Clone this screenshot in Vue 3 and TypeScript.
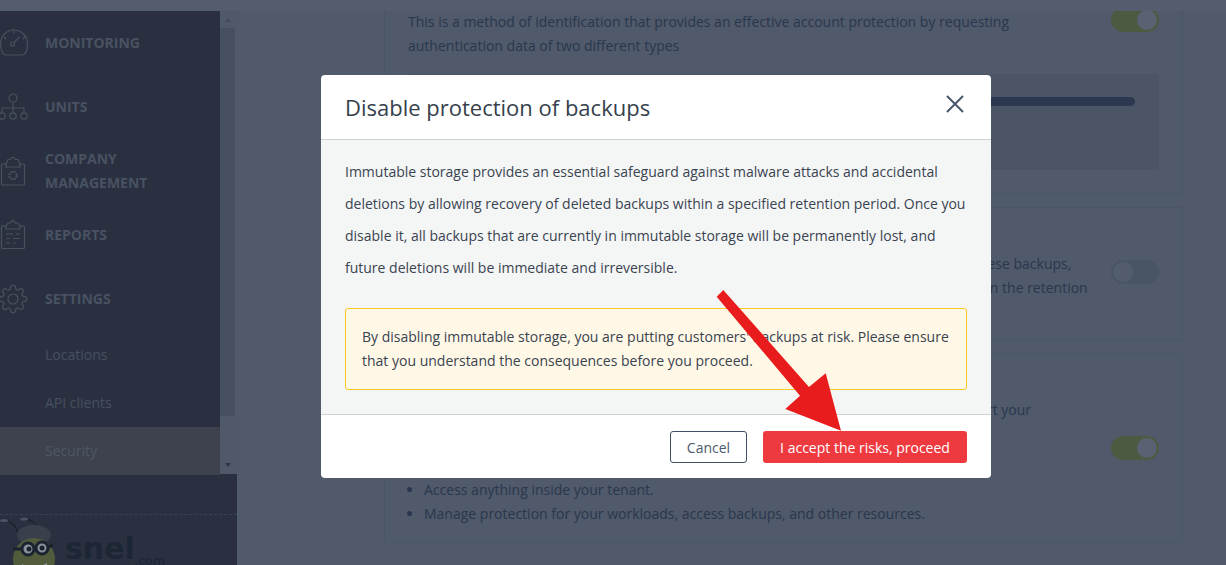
<script setup lang="ts">
interface NavItem {
  lines: string[];
  sub?: boolean;
  active?: boolean;
  icon?: string;
}
const nav: NavItem[] = [
  { lines: ["MONITORING"], icon: "gauge" },
  { lines: ["UNITS"], icon: "org" },
  { lines: ["COMPANY", "MANAGEMENT"], icon: "cog-clip" },
  { lines: ["REPORTS"], icon: "report" },
  { lines: ["SETTINGS"], icon: "gear" },
  { lines: ["Locations"], sub: true },
  { lines: ["API clients"], sub: true },
  { lines: ["Security"], sub: true, active: true },
];
</script>

<template>
  <div class="page">
    <div class="topbar"></div>
    <div class="shell">
      <aside class="side">
        <div class="side-top">
          <nav class="nav">
            <div
              v-for="item in nav"
              :key="item.lines[0]"
              class="row"
              :class="{ sub: item.sub, active: item.active }"
            >
              <svg v-if="item.icon" class="ico" width="30" height="30" viewBox="0 0 30 30" fill="none">
                <g v-if="item.icon === 'gauge'">
                  <path d="M6 27H21.500C25 27 27.500 23 27.500 15.500A13.500 13.500 0 1 0 0.500 15.500C0.500 23 3 27 6 27Z" />
                  <circle cx="12.500" cy="16" r="2" />
                  <path d="M14 14.500L19.500 9M14 2.500V5.500M4 9L6 11M25 9L23 11" />
                </g>
                <g v-else-if="item.icon === 'org'">
                  <circle cx="13" cy="6" r="4" />
                  <circle cx="2" cy="24" r="3.200" />
                  <circle cx="13" cy="24" r="3.200" />
                  <circle cx="24" cy="24" r="3.200" />
                  <path d="M13 10V20.800M2 20.800V16H24V20.800" />
                </g>
                <g v-else-if="item.icon === 'cog-clip'">
                  <path d="M7 8H2.500A1 1 0 0 0 1.500 9V28A1 1 0 0 0 2.500 29H23.500A1 1 0 0 0 24.500 28V9A1 1 0 0 0 23.500 8H19" />
                  <path d="M6 11H20V8L18 3.500H15L14 1.500H11.500L10.500 3.500H8L6 8Z" />
                  <circle cx="13" cy="19.500" r="3.800" stroke-dasharray="2 1" stroke-width="2" />
                </g>
                <g v-else-if="item.icon === 'report'">
                  <path d="M7 6H2.500A1 1 0 0 0 1.500 7V27.500A1 1 0 0 0 2.500 28.500H23.500A1 1 0 0 0 24.500 27.500V7A1 1 0 0 0 23.500 6H19" />
                  <path d="M6 9H20V6L18 3H15L14 0.800H11.500L10.500 3H8L6 6Z" />
                  <path d="M6 14H13M16 14H20M6 18.500H10M13 18.500H20M6 23H10M13 23H16" />
                </g>
                <g v-else transform="translate(-2 0) scale(1.25)" stroke-width="0.96">
                  <circle cx="12" cy="12" r="4" />
                  <path d="M19.400 15a1.650 1.650 0 0 0 .33 1.820l.06.06a2 2 0 0 1 0 2.830 2 2 0 0 1-2.830 0l-.06-.06a1.650 1.650 0 0 0-1.820-.33 1.650 1.650 0 0 0-1 1.510V21a2 2 0 0 1-2 2 2 2 0 0 1-2-2v-.09A1.650 1.650 0 0 0 9 19.400a1.650 1.650 0 0 0-1.820.33l-.06.06a2 2 0 0 1-2.830 0 2 2 0 0 1 0-2.830l.06-.06a1.650 1.650 0 0 0 .33-1.820 1.650 1.650 0 0 0-1.510-1H3a2 2 0 0 1-2-2 2 2 0 0 1 2-2h.09A1.650 1.650 0 0 0 4.600 9a1.650 1.650 0 0 0-.33-1.820l-.06-.06a2 2 0 0 1 0-2.830 2 2 0 0 1 2.830 0l.06.06a1.650 1.650 0 0 0 1.820.33H9a1.650 1.650 0 0 0 1-1.510V3a2 2 0 0 1 2-2 2 2 0 0 1 2 2v.09a1.650 1.650 0 0 0 1 1.510 1.650 1.650 0 0 0 1.820-.33l.06-.06a2 2 0 0 1 2.830 0 2 2 0 0 1 0 2.830l-.06.06a1.650 1.650 0 0 0-.33 1.820V9a1.650 1.650 0 0 0 1.510 1H21a2 2 0 0 1 2 2 2 2 0 0 1-2 2h-.09a1.650 1.650 0 0 0-1.510 1z" />
                </g>
              </svg>
              <div class="label">
                <div v-for="l in item.lines" :key="l">{{ l }}</div>
              </div>
            </div>
          </nav>
          <div class="scroll">
            <span class="arrow up"></span>
            <span class="thumb"></span>
            <span class="arrow down"></span>
          </div>
        </div>
        <div class="side-foot">
          <div class="logo">
            <svg class="bee" width="56" height="50" viewBox="0 0 56 50" fill="none">
              <path d="M0 2C8 0 14 5 17 14M22 0C30 0 36 5 40 12" stroke="#1b2331" stroke-width="1.300" />
              <ellipse cx="3" cy="1.500" rx="4" ry="1.600" fill="#4a5363" />
              <ellipse cx="23" cy="0" rx="4" ry="1.600" fill="#4a5363" />
              <ellipse cx="33" cy="16" rx="17" ry="10" fill="#3a3f4c" />
              <ellipse cx="33" cy="40" rx="21" ry="21" fill="#525c3c" />
              <path d="M21 45C27 49 39 49 46 44V50H21Z" fill="#8e959c" />
              <circle cx="27" cy="30" r="6" fill="#8a939c" stroke="#1b2331" stroke-width="3" />
              <circle cx="41" cy="29" r="6" fill="#8a939c" stroke="#1b2331" stroke-width="3" />
              <circle cx="28" cy="30" r="2.500" fill="#1b2331" />
              <circle cx="41" cy="29" r="2.500" fill="#1b2331" />
              <path d="M20 30H12M47 28L52 26" stroke="#1b2331" stroke-width="3" />
            </svg>
            <span class="word">snel</span><span class="dot">.com</span>
          </div>
        </div>
      </aside>

      <main class="main">
        <section class="card card-a">
          <div class="split">
            <p class="txt">This is a method of identification that provides an effective account protection by requesting<br />authentication data of two different types</p>
            <span class="toggle on top"><i></i></span>
          </div>
          <div class="box"><div class="bar"></div></div>
        </section>
        <section class="card card-b">
          <div class="split">
            <div>
              <h3 class="head">Immutable storage</h3>
              <p class="txt">Immutable storage keeps deleted backups in a safe state for a period. You can recover these backups,<br />and you will keep paying for the storage space that they occupy, even after deletion, within the retention<br />period that you specify.</p>
            </div>
            <span class="toggle off-pos"><i></i></span>
          </div>
        </section>
        <section class="card card-c">
          <div class="split">
            <div>
              <h3 class="head">Support access</h3>
              <p class="txt">When you enable this setting, support engineers receive access to your account to support your<br />workloads. While this option is on, they are able to:</p>
              <ul class="list">
                <li>Access anything inside your tenant.</li>
                <li>Manage protection for your workloads, access backups, and other resources.</li>
              </ul>
            </div>
            <span class="toggle on c-pos"><i></i></span>
          </div>
        </section>
      </main>
    </div>

    <div class="overlay">
      <div class="modal" role="dialog">
        <header class="m-head">
          <h2>Disable protection of backups</h2>
          <svg class="close" width="18" height="18" viewBox="0 0 18 18">
            <path d="M1 1L17 17M17 1L1 17" stroke="#47566a" stroke-width="2" fill="none" />
          </svg>
        </header>
        <div class="m-body">
          <p>Immutable storage provides an essential safeguard against malware attacks and accidental deletions by allowing recovery of deleted backups within a specified retention period. Once you disable it, all backups that are currently in immutable storage will be permanently lost, and future deletions will be immediate and irreversible.</p>
          <div class="warn">By disabling immutable storage, you are putting customers' backups at risk. Please ensure that you understand the consequences before you proceed.</div>
        </div>
        <footer class="m-foot">
          <button class="btn ghost">Cancel</button>
          <button class="btn danger">I accept the risks, proceed</button>
        </footer>
      </div>
    </div>

    <svg class="pointer" width="1226" height="565" viewBox="0 0 1226 565">
      <polygon points="716.700,296.700 723.300,290 809,387 825.700,373.300 841,430.700 785.300,409 800,395.700" fill="#e81c1c" />
    </svg>
  </div>
</template>

<style>
html,
body {
  margin: 0;
  background: #505a6a;
}
</style>

<style scoped>
.page {
  position: relative;
  width: 1226px;
  height: 565px;
  overflow: hidden;
  background: #505a6a;
  font-family: "Open Sans", "Liberation Sans", sans-serif;
  font-size: 14px;
  line-height: 24px;
  display: flex;
  flex-direction: column;
}
.topbar {
  height: 11px;
  flex: none;
  background: #535d6d;
  position: relative;
  z-index: 1;
}
.shell {
  flex: 1;
  display: flex;
  min-height: 0;
}
.side {
  width: 237px;
  flex: none;
  display: flex;
  flex-direction: column;
  background: #2a3040;
}
.side-top {
  height: 463px;
  flex: none;
  display: flex;
}
.nav {
  width: 220px;
  flex: none;
}
.row {
  position: relative;
  height: 64px;
  padding-left: 45px;
  display: flex;
  align-items: center;
  color: #485262;
  font-weight: 700;
  box-sizing: border-box;
}
.row.sub {
  height: 48px;
  font-weight: 400;
  color: #465060;
}
.row.active {
  background: #3e424e;
  color: #4f5765;
}
.ico {
  position: absolute;
  left: 0;
  top: 17px;
  overflow: visible;
  stroke: #48525f;
  stroke-width: 1.200;
}
.scroll {
  width: 17px;
  flex: none;
  background: #4f5969;
  position: relative;
  display: flex;
  flex-direction: column;
}
.thumb {
  position: absolute;
  left: 0;
  top: 17px;
  width: 15px;
  height: 388px;
  background: #465061;
}
.arrow {
  position: absolute;
  left: 5px;
  width: 0;
  height: 0;
  border-left: 3.500px solid transparent;
  border-right: 3.500px solid transparent;
}
.arrow.up {
  top: 7px;
  border-bottom: 4px solid #414a59;
}
.arrow.down {
  bottom: 7px;
  border-top: 4px solid #2f3645;
}
.side-foot {
  flex: 1;
  padding-top: 40px;
  min-height: 0;
  overflow: hidden;
}
.logo {
  border-top: 1px dashed #3a4150;
  padding: 1px 0 0 1px;
  display: flex;
  align-items: flex-start;
  position: relative;
}
.bee {
  flex: none;
  margin-top: 3px;
  overflow: visible;
}
.word {
  font-family: "DejaVu Sans", sans-serif;
  font-weight: 700;
  font-size: 30px;
  line-height: 40px;
  color: #1c2635;
  margin: 13px 0 0 8px;
}
.dot {
  font-family: "Open Sans", sans-serif;
  font-weight: 600;
  font-size: 13px;
  line-height: 16px;
  color: #1c2635;
  margin-top: 36px;
}
.main {
  flex: 1;
  min-width: 0;
  padding: 0 43px 0 147px;
  display: flex;
  flex-direction: column;
  color: #2a374e;
}
.card {
  border: 1px solid #485668;
  border-radius: 3px;
  padding: 0 23px;
  box-sizing: border-box;
  flex: none;
}
.card-a {
  height: 184px;
  margin-top: -1px;
  border-top: 0;
}
.card-b {
  height: 134px;
  margin-top: 13px;
  padding-top: 11px;
}
.card-c {
  height: 190px;
  margin-top: 12px;
  padding-top: 11px;
}
.split {
  display: flex;
  justify-content: space-between;
  align-items: flex-start;
}
.txt {
  margin: 0;
  white-space: nowrap;
}
.head {
  margin: 0 0 9px;
  font-size: 14px;
  font-weight: 600;
  line-height: 24px;
}
.list {
  margin: 32px 0 0;
  padding-left: 16px;
  list-style: disc;
}
.box {
  margin-top: 16px;
  height: 96px;
  background: #4b5566;
  border-radius: 2px;
  padding: 23px 24px 0;
  box-sizing: border-box;
}
.bar {
  height: 9px;
  border-radius: 5px;
  background: #2c3850;
}
.toggle {
  flex: none;
  width: 48px;
  height: 24px;
  border-radius: 12px;
  background: #4a5564;
  padding: 2px;
  box-sizing: border-box;
  display: flex;
}
.toggle i {
  display: block;
  width: 20px;
  height: 20px;
  border-radius: 50%;
  background: #525c6c;
}
.toggle.on {
  background: #4c5a41;
  justify-content: flex-end;
}
.toggle.on i {
  background: #586273;
}
.toggle.top {
  margin-top: -2px;
}
.toggle.off-pos {
  margin-top: 41px;
}
.toggle.c-pos {
  margin-top: 71px;
}
.overlay {
  position: absolute;
  inset: 0;
  z-index: 2;
  padding: 75px 0 0 321px;
  box-sizing: border-box;
}
.modal {
  width: 670px;
  height: 403px;
  border-radius: 4px;
  overflow: hidden;
  background: #fff;
  color: #3a4350;
  display: flex;
  flex-direction: column;
}
.m-head {
  height: 65px;
  flex: none;
  box-sizing: border-box;
  border-bottom: 1px solid #cfd2d4;
  padding: 0 27px 0 24px;
  display: flex;
  align-items: center;
  justify-content: space-between;
}
.m-head h2 {
  margin: 0;
  font-size: 22px;
  font-weight: 400;
  line-height: 64px;
  color: #363f4c;
}
.close {
  margin-top: -7px;
}
.m-body {
  flex: 1;
  background: #f4f6f6;
  border-bottom: 1px solid #cfd2d4;
  padding: 16px 24px 0;
  box-sizing: border-box;
}
.m-body p {
  margin: 0;
  line-height: 32px;
}
.warn {
  margin-top: 24px;
  height: 82px;
  box-sizing: border-box;
  padding: 16px;
  background: #fff8e6;
  border: 1px solid #ffc726;
  border-radius: 3px;
}
.m-foot {
  height: 63px;
  flex: none;
  box-sizing: border-box;
  padding: 16px 24px 0;
  display: flex;
  justify-content: flex-end;
  gap: 16px;
}
.btn {
  height: 32px;
  box-sizing: border-box;
  border-radius: 3px;
  font: inherit;
  line-height: 20px;
  padding: 1px 0 0;
}
.ghost {
  width: 77px;
  background: #fff;
  border: 1px solid #3f4f65;
  color: #4b5a6c;
}
.danger {
  width: 204px;
  background: #ee3a3f;
  border: 0;
  color: #fff;
  font-weight: 500;
}
.pointer {
  position: absolute;
  left: 0;
  top: 0;
  z-index: 3;
  pointer-events: none;
}
</style>
